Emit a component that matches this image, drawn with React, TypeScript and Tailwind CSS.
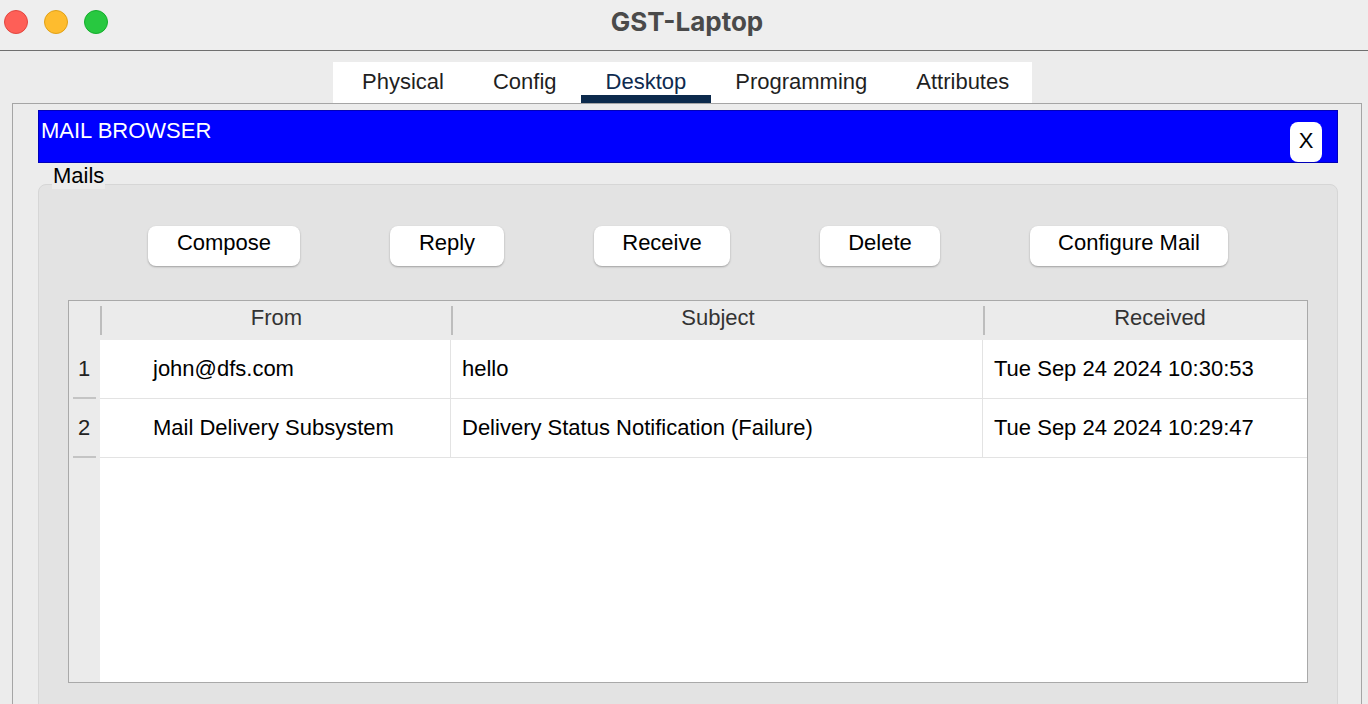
import React from 'react';

const tabs = ['Physical', 'Config', 'Desktop', 'Programming', 'Attributes'];

const buttons = [
  { label: 'Compose', w: 'w-[152px]' },
  { label: 'Reply', w: 'w-[114px]' },
  { label: 'Receive', w: 'w-[136px]' },
  { label: 'Delete', w: 'w-[120px]' },
  { label: 'Configure Mail', w: 'w-[198px]' },
];

const mails = [
  { from: 'john@dfs.com', subject: 'hello', received: 'Tue Sep 24 2024 10:30:53' },
  { from: 'Mail Delivery Subsystem', subject: 'Delivery Status Notification (Failure)', received: 'Tue Sep 24 2024 10:29:47' },
];

function HeaderCell({ label, w, extra = '' }: { label: string; w: string; extra?: string }) {
  return (
    <div className={`${w} h-full flex items-center`}>
      <div className="w-[2px] h-[29px] bg-[#bdbdbd]" />
      <div className={`flex-1 text-center text-[#333] -mt-[6px] ${extra}`}>{label}</div>
    </div>
  );
}

export default function App() {
  return (
    <div className="w-full h-[704px] overflow-hidden bg-[#ececec] font-['Liberation_Sans',Arial,sans-serif] text-[22px] leading-[25px] text-black">
      {/* window title bar */}
      <div className="h-[51px] border-b border-[#6f6f6f] bg-[#eeeeee] flex items-start">
        <div className="w-[108px] flex gap-4 pl-[4px] pt-[10px]">
          <div className="w-6 h-6 rounded-full bg-[#fe5f57] border border-[#e2463f]" />
          <div className="w-6 h-6 rounded-full bg-[#febc2e] border border-[#e1a116]" />
          <div className="w-6 h-6 rounded-full bg-[#28c840] border border-[#14ae2c]" />
        </div>
        <div className="flex-1 text-center pt-[9px] pl-[6px] font-['Inter',sans-serif] font-bold text-[26px] leading-[26px] text-[#4a4a4a]">
          GST-Laptop
        </div>
        <div className="w-[108px]" />
      </div>

      {/* tabs */}
      <div className="mt-[11px] ml-[333px] w-[699px] h-[41px] bg-white flex pl-[4.5px]">
        {tabs.map((t) => (
          <div key={t} className="h-full px-[24.5px] flex flex-col">
            <div className={`flex-1 flex items-center pt-[5px] ${t === 'Desktop' ? 'text-[#0e2a4f]' : 'text-[#1f1f1f]'}`}>{t}</div>
            <div className={`h-[8px] -mx-[24.5px] ${t === 'Desktop' ? 'bg-[#0c2a4c]' : ''}`} />
          </div>
        ))}
      </div>

      {/* device panel */}
      <div className="ml-[12px] mr-[6px] border-t border-l border-r border-[#a5a5a5] pt-[6px] pl-[25px] pr-[23px]">
        <div className="h-[53px] bg-[#0000ff] border border-[#0000b8] flex justify-between items-start">
          <div className="text-white pl-[2px] pt-[7px]">MAIL BROWSER</div>
          <div className="mt-[11px] mr-[15px] w-[32px] h-[40px] bg-white rounded-[8px] flex items-center justify-center pb-[3px]">X</div>
        </div>

        <div className="relative z-10 w-fit ml-[14px] h-[26px] px-[1px] bg-[#ececec]">Mails</div>

        <div className="-mt-[5px] bg-[#e3e3e3] border border-[#d6d6d6] rounded-[8px] pt-[41px] pb-[40px]">
          <div className="flex justify-center gap-[90px]">
            {buttons.map((b) => (
              <div
                key={b.label}
                className={`${b.w} h-[40px] bg-white rounded-[8px] shadow-[0_1px_2px_rgba(0,0,0,0.3)] flex items-center justify-center pb-[7px]`}
              >
                {b.label}
              </div>
            ))}
          </div>

          <div className="mt-[34px] mx-[29px] h-[383px] border border-[#a9a9a9] bg-white flex">
            {/* row header column */}
            <div className="w-[31px] bg-[#ebebeb] flex flex-col">
              <div className="h-[39px]" />
              {mails.map((_, i) => (
                <div key={i} className="h-[59px] flex flex-col">
                  <div className="flex-1 flex items-center justify-center text-[#222] pr-[1px] pb-[1px]">{i + 1}</div>
                  <div className="h-[2px] mx-[4px] bg-[#c4c4c4]" />
                </div>
              ))}
            </div>

            <div className="flex-1 flex flex-col">
              <div className="h-[39px] bg-[#ebebeb] flex">
                <HeaderCell label="From" w="w-[351px]" />
                <HeaderCell label="Subject" w="w-[532px]" />
                <HeaderCell label="Received" w="flex-1" extra="pl-[28px]" />
              </div>
              {mails.map((m) => (
                <div key={m.received} className="h-[59px] flex border-b border-[#e3e3e3]">
                  <div className="w-[351px] border-r border-[#e3e3e3] flex items-center pl-[53px] pb-[1px]">{m.from}</div>
                  <div className="w-[532px] border-r border-[#e3e3e3] flex items-center pl-[11px] pb-[1px]">{m.subject}</div>
                  <div className="flex-1 flex items-center pl-[11px] pb-[1px]">{m.received}</div>
                </div>
              ))}
            </div>
          </div>
        </div>
      </div>
    </div>
  );
}
